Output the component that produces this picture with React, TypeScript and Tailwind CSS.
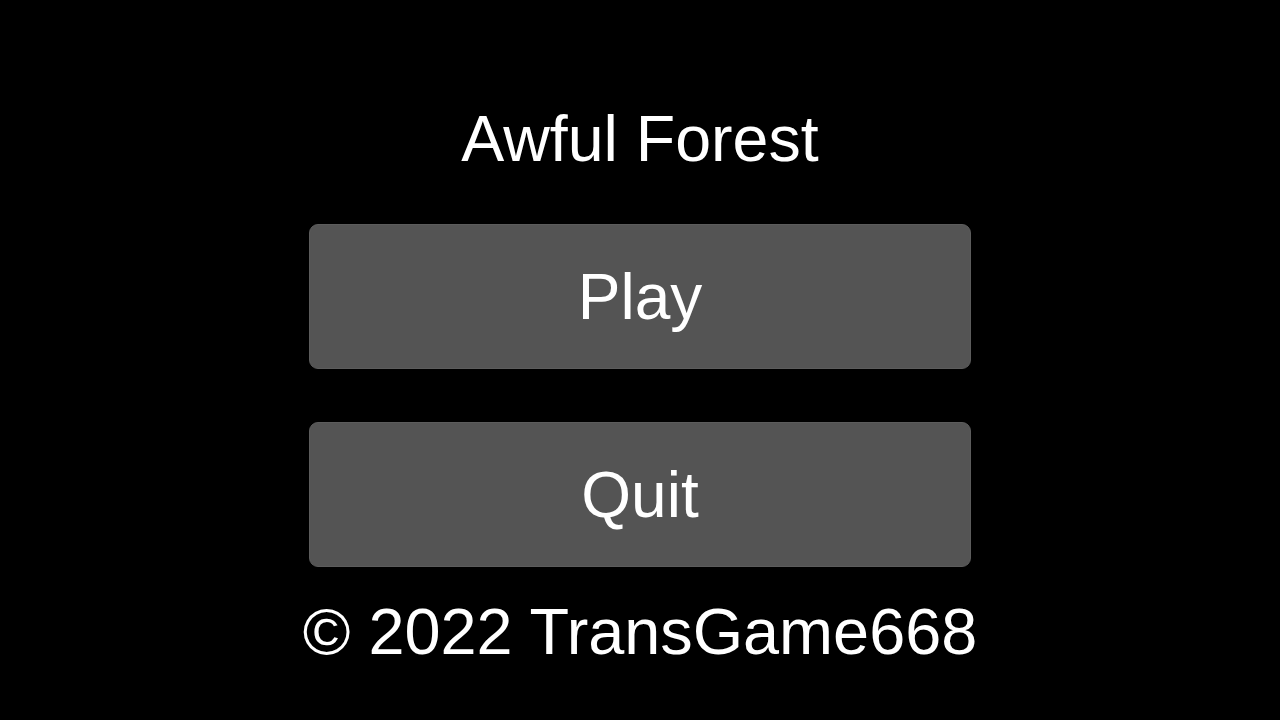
export default function App() {
  return (
    <div
      className="w-[1280px] h-[720px] bg-black flex flex-col items-center pt-[107px] text-white"
      style={{ fontFamily: '"Liberation Sans", Arial, sans-serif' }}
    >
      <h1 className="text-[64.5px] leading-[64px] h-[64px]">Awful Forest</h1>
      <div className="mt-[53px] flex flex-col gap-[53px]">
        <button className="w-[662px] h-[145px] rounded-[9px] bg-[#545454] border border-[#5c5c5c] text-[64px] leading-[64px] text-white flex items-center justify-center">
          Play
        </button>
        <button className="w-[662px] h-[145px] rounded-[9px] bg-[#545454] border border-[#5c5c5c] text-[64px] leading-[64px] text-white flex items-center justify-center">
          Quit
        </button>
      </div>
      <p className="mt-[33px] text-[64.8px] leading-[64px]">© 2022 TransGame668</p>
    </div>
  );
}
